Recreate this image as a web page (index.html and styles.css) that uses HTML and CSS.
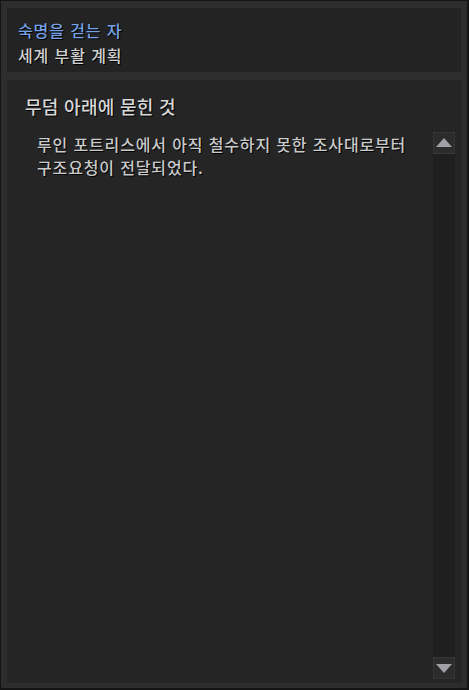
FILE: index.html
```html
<!DOCTYPE html>
<html lang="ko">
<head>
    <meta charset="UTF-8">
    <title>퀘스트 정보</title>
    <link rel="stylesheet" href="styles.css">
</head>
<body>
    <div class="window">
        <div class="quest-header">
            <div class="quest-chain">숙명을 걷는 자</div>
            <div class="quest-group">세계 부활 계획</div>
        </div>
        <div class="quest-body">
            <h2 class="quest-title">무덤 아래에 묻힌 것</h2>
            <div class="quest-row">
                <p class="quest-desc">루인 포트리스에서 아직 철수하지 못한 조사대로부터 구조요청이 전달되었다.</p>
                <div class="scrollbar">
                    <div class="scroll-btn"><span class="arrow up"></span></div>
                    <div class="scroll-track"></div>
                    <div class="scroll-btn"><span class="arrow down"></span></div>
                </div>
            </div>
        </div>
    </div>
</body>
</html>
```

FILE: styles.css
```css
html, body { margin: 0; padding: 0; width: 469px; height: 690px; background-color: #121212; font-family: "Noto Sans CJK KR", "Noto Sans", sans-serif; }
.window { box-sizing: border-box; width: 469px; height: 690px; border: 1px solid #141414; border-bottom-width: 2px; border-right-width: 2px; background-color: #2d2d2d; padding: 7px 6px 5px 6px; display: flex; flex-direction: column; gap: 8px; }
.quest-header { height: 64px; box-sizing: border-box; background-color: #232323; padding: 10px 11px 0 11px; font-size: 16px; line-height: 25px; letter-spacing: 0.9px; font-weight: 500; text-shadow: 1px 1px 0 #000; }
.quest-chain { color: #75a3e6; }
.quest-group { color: #d2d2d2; }
.quest-body { flex: 1; background-color: #252525; padding: 13px 6px 4px 18px; display: flex; flex-direction: column; min-height: 0; }
.quest-title { margin: 0; font-size: 18px; font-weight: 500; line-height: 26px; color: #d8d8d8; letter-spacing: 0.3px; text-shadow: 1px 1px 0 #000; }
.quest-row { flex: 1; display: flex; margin-top: 13px; min-height: 0; }
.quest-desc { flex: 1; margin: 0; padding: 1px 20px 0 12px; font-size: 16px; line-height: 23px; color: #cacaca; letter-spacing: 0.85px; word-break: keep-all; font-weight: 500; text-shadow: 1px 1px 0 #000; }
.scrollbar { width: 22px; display: flex; flex-direction: column; background-color: #1f1f1f; }
.scroll-track { flex: 1; }
.scroll-btn { box-sizing: border-box; height: 22px; background-color: #2c2c2c; border: 1px solid #363636; display: flex; justify-content: center; align-items: center; }
.arrow { width: 0; height: 0; border-left: 8px solid transparent; border-right: 8px solid transparent; }
.arrow.up { border-bottom: 9px solid #a0a0a6; margin-top: -1px; }
.arrow.down { border-top: 9px solid #a0a0a6; margin-top: 1px; }
```
